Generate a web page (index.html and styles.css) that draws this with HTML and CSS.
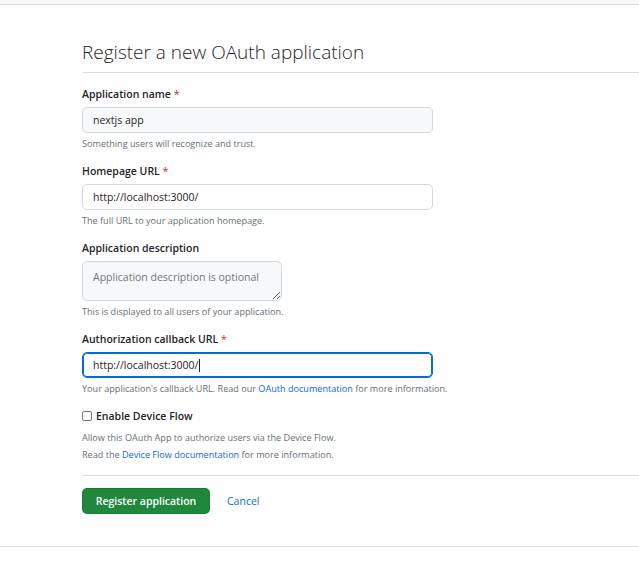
FILE: index.html
```html
<!DOCTYPE html>
<html lang="en">
<head>
<meta charset="utf-8">
<title>Register a new OAuth application</title>
<link rel="stylesheet" href="styles.css">
</head>
<body>
<div class="topbar"></div>
<main class="page">
  <div class="subhead">
    <h2 class="subhead-title">Register a new OAuth application</h2>
  </div>
  <form class="form">
    <div class="field">
      <label class="label" for="name">Application name <span class="req">*</span></label>
      <input class="input input-muted" id="name" type="text" value="nextjs app">
      <p class="note">Something users will recognize and trust.</p>
    </div>
    <div class="field">
      <label class="label" for="home">Homepage URL <span class="req">*</span></label>
      <input class="input" id="home" type="text" value="http://localhost:3000/">
      <p class="note">The full URL to your application homepage.</p>
    </div>
    <div class="field">
      <label class="label" for="desc">Application description</label>
      <textarea class="textarea" id="desc" placeholder="Application description is optional"></textarea>
      <p class="note">This is displayed to all users of your application.</p>
    </div>
    <div class="field">
      <label class="label" for="cb">Authorization callback URL <span class="req">*</span></label>
      <div class="input input-focus" id="cb" role="textbox" aria-label="Authorization callback URL">http://localhost:3000/<span class="caret"></span></div>
      <p class="note">Your application's callback URL. Read our <a class="link" href="#">OAuth documentation</a> for more information.</p>
    </div>
    <div class="check-field">
      <label class="check-label"><input class="checkbox" type="checkbox"> Enable Device Flow</label>
      <p class="note note-first">Allow this OAuth App to authorize users via the Device Flow.</p>
      <p class="note note-second">Read the <a class="link" href="#">Device Flow documentation</a> for more information.</p>
    </div>
    <div class="actions">
      <button class="btn-primary" type="button">Register application</button>
      <a class="cancel" href="#">Cancel</a>
    </div>
  </form>
</main>
<footer class="footer"></footer>
</body>
</html>
```
FILE: styles.css
```css
* { box-sizing: border-box; }
html, body { margin: 0; padding: 0; background: #ffffff; }
body {
  font-family: "Open Sans", "Noto Sans", sans-serif;
  color: #1f2328;
}
.topbar {
  height: 5px;
  background: #f6f8fa;
  border-bottom: 1px solid #d8dee4;
}
.page {
  padding-left: 82px;
}
.subhead {
  margin-top: 35px;
  padding-bottom: 8px;
  border-bottom: 1px solid #d8dee4;
}
.subhead-title {
  margin: 0;
  font-size: 19px;
  font-weight: 300;
  line-height: 24px;
  color: #1f2328;
}
.form {
  margin-top: 13px;
}
.field { margin-bottom: 12px; }
.label {
  display: block;
  font-size: 10.5px;
  font-weight: 600;
  line-height: 16px;
  margin-bottom: 5px;
  color: #1f2328;
}
.req { color: #d1242f; font-weight: 400; }
.input {
  display: block;
  width: 351px;
  height: 26px;
  padding: 0 10px;
  font-family: inherit;
  font-size: 10.5px;
  line-height: 24px;
  color: #1f2328;
  background: #ffffff;
  border: 1px solid #d0d7de;
  border-radius: 5px;
  outline: none;
}
.input-muted { background: #f6f8fa; }
.input-focus {
  border-color: #0969da;
  box-shadow: inset 0 0 0 1px #0969da;
}
.caret {
  display: inline-block;
  width: 1px;
  height: 13px;
  margin-left: 1px;
  background: #1f2328;
  vertical-align: -3px;
}
.textarea {
  display: block;
  width: 200px;
  height: 40px;
  padding: 7px 10px;
  font-family: inherit;
  font-size: 10.5px;
  line-height: 16px;
  background: #f6f8fa;
  border: 1px solid #d0d7de;
  border-radius: 5px;
  resize: vertical;
  outline: none;
}
.textarea::placeholder { color: #6e7781; }
.note {
  margin: 4px 0 0;
  font-size: 9.1px;
  line-height: 14px;
  color: #656d76;
  white-space: nowrap;
}
.link { color: #0969da; text-decoration: none; }
.check-field { margin-top: 0; }
.check-label {
  display: flex;
  align-items: center;
  gap: 4px;
  font-size: 10.5px;
  font-weight: 600;
  line-height: 16px;
}
.checkbox {
  appearance: none;
  -webkit-appearance: none;
  margin: 0;
  width: 10px;
  height: 10px;
  border: 1px solid #767676;
  border-radius: 2px;
  background: #ffffff;
}
.note-first { margin-top: 7px; }
.note-second { margin-top: 3px; }
.actions {
  margin-top: 13px;
  padding-top: 12px;
  border-top: 1px solid #d8dee4;
  display: flex;
  align-items: center;
  gap: 17px;
}
.btn-primary {
  width: 128px;
  height: 26px;
  padding: 0;
  font-family: inherit;
  font-size: 10.5px;
  font-weight: 600;
  color: #ffffff;
  background: #1f883d;
  border: 1px solid rgba(31, 35, 40, 0.15);
  border-radius: 5px;
}
.cancel {
  font-size: 10.5px;
  color: #0969da;
  text-decoration: none;
}
.footer {
  margin-top: 32px;
  border-top: 1px solid #d8dee4;
}
```
